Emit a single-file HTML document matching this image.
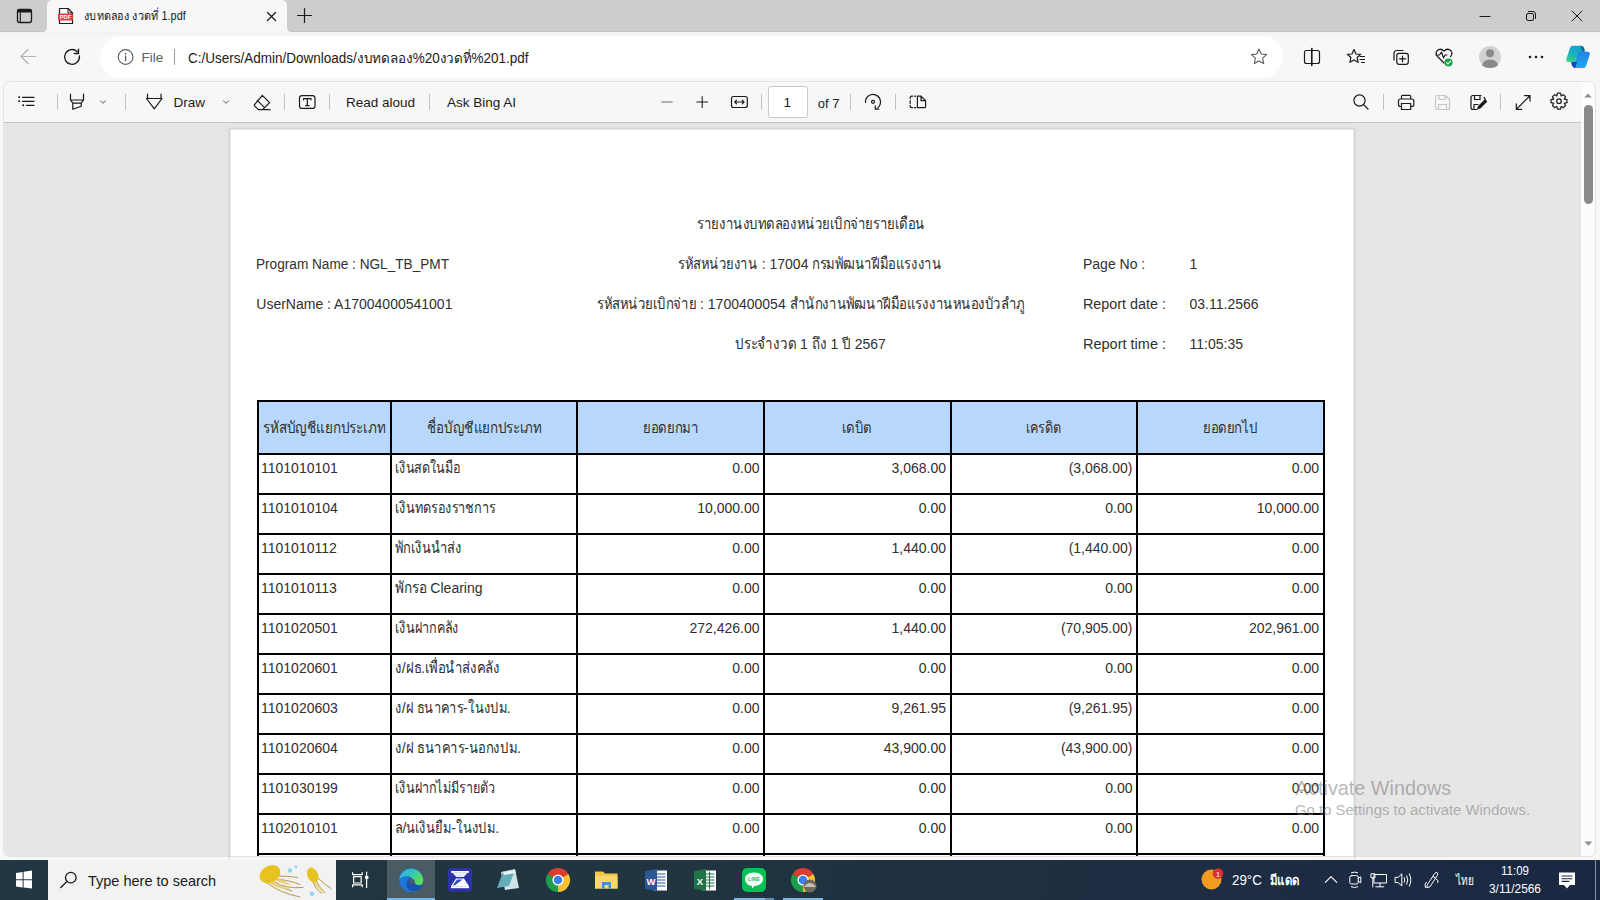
<!DOCTYPE html>
<html><head><meta charset="utf-8">
<style>
*{margin:0;padding:0;box-sizing:border-box}
html,body{width:1600px;height:900px;overflow:hidden;background:#f7f7f7;font-family:"Liberation Sans",sans-serif;color:#1a1a1a}
.abs{position:absolute}
#tabstrip{left:0;top:0;width:1600px;height:32px;background:#cdcdcd;border-bottom:1px solid #c3c3c3}
#nav{left:0;top:32px;width:1600px;height:50px;background:linear-gradient(#f1f1f1,#f7f7f7 5px)}
#addr{left:100px;top:36px;width:1183px;height:42px;border-radius:21px;background:#fff}
#frame{left:3px;top:81px;width:1593px;height:776px;border-radius:7px;background:#e6e6e6;overflow:hidden;border:1px solid #e3e3e3}
#tb{left:0;top:0;width:1577px;height:41px;background:#f7f7f7;border-bottom:1px solid #c4c4c4}
#sb{left:1577px;top:0;width:15px;height:776px;background:#fcfcfc}
#taskbar{left:0;top:860px;width:1600px;height:40px;background:linear-gradient(90deg,#22363f 0%,#213540 40%,#1e2e42 70%,#1a2843 100%)}
#startbtn{left:0;top:860px;width:48px;height:40px;background:#213843}
#search{left:48px;top:860px;width:288px;height:40px;background:#f2f2f2}
#edgehl{left:387px;top:860px;width:48px;height:40px;background:#4b5b64}
.tx{position:absolute;white-space:nowrap;line-height:1}
#tabtitle{left:84px;top:9.5px;font-size:12px;color:#1a1a1a;transform-origin:0 0;transform:scaleX(.905)}
#filetx{left:141.5px;top:51px;font-size:13.5px;color:#5d5d5d}
#urltx{left:187.5px;top:50.5px;font-size:14px;color:#1a1a1a;transform-origin:0 0;transform:scaleX(.964)}
.tbt{font-size:13.5px;color:#1a1a1a;top:96px}
#pgbox{left:768px;top:86px;width:40px;height:32px;border:1px solid #c9c9c9;border-radius:3px;background:#fff}
#watermark1{left:1295px;top:778.5px;font-size:19.8px;color:rgba(120,120,120,.55)}
#watermark2{left:1295px;top:802.5px;font-size:14.9px;color:rgba(120,120,120,.55)}
.tbk{color:#fff}


#page{left:231px;top:130px;width:1122px;height:726px;background:#fff;overflow:hidden}
#pshadow{left:230px;top:129px;width:1124px;height:740px;box-shadow:0 0 2px 1px rgba(0,0,0,.10)}
#page .t{position:absolute;white-space:nowrap;font-size:14px;line-height:16px;color:#303030}
#page .t.c{width:800px;text-align:center}
#page .t.r{width:400px;text-align:right}
#page .in{display:inline-block;transform-origin:0 0}
#page .t.c .in{transform-origin:50% 0}
#page .t.r .in{transform-origin:100% 0}
#page .th{font-size:15.5px}
#page .hbg{position:absolute;background:#b8d8fb}
#page .hl{position:absolute;height:2px;background:#000}
#page .vl{position:absolute;width:2px;background:#000}

</style></head><body>
<div id="tabstrip" class="abs"></div>
<div id="nav" class="abs"></div>
<div id="addr" class="abs"></div>
<div id="frame" class="abs">
  <div id="tb" class="abs"></div>
  <div id="sb" class="abs"></div>
</div>
<div id="pshadow" class="abs"></div>
<div id="page" class="abs"><div class="t c " style="left:179.89999999999998px;top:86.30000000000001px"><span class="in" id="t1"><span class="th" style="display:inline-block;transform:scaleX(0.8465);transform-origin:0 0;margin-right:-41.30px">รายงานงบทดลองหน่วยเบิกจ่ายรายเดือน</span></span></div>
<div class="t " style="left:25.30000000000001px;top:126px"><span class="in" id="t2" style="transform:scaleX(0.9728)">Program Name : NGL_TB_PMT</span></div>
<div class="t c " style="left:179.0px;top:125.69999999999999px"><span class="in" id="t3"><span class="th" style="display:inline-block;transform:scaleX(0.8441);transform-origin:0 0;margin-right:-14.65px">รหัสหน่วยงาน</span> : 17004 <span class="th" style="display:inline-block;transform:scaleX(0.8441);transform-origin:0 0;margin-right:-23.85px">กรมพัฒนาฝีมือแรงงาน</span></span></div>
<div class="t " style="left:852.0px;top:125.75px"><span class="in" id="t4">Page No :</span></div>
<div class="t " style="left:958.5px;top:125.75px"><span class="in" id="t5">1</span></div>
<div class="t " style="left:25.30000000000001px;top:166.10000000000002px"><span class="in" id="t6">UserName : A17004000541001</span></div>
<div class="t c " style="left:179.70000000000005px;top:165.7px"><span class="in" id="t7"><span class="th" style="display:inline-block;transform:scaleX(0.8479);transform-origin:0 0;margin-right:-17.79px">รหัสหน่วยเบิกจ่าย</span> : 1700400054 <span class="th" style="display:inline-block;transform:scaleX(0.8479);transform-origin:0 0;margin-right:-42.13px">สำนักงานพัฒนาฝีมือแรงงานหนองบัวลำภู</span></span></div>
<div class="t " style="left:852.0px;top:165.75px"><span class="in" id="t8" style="transform:scaleX(1.0255)">Report date :</span></div>
<div class="t " style="left:958.5px;top:165.75px"><span class="in" id="t9">03.11.2566</span></div>
<div class="t c " style="left:179.29999999999995px;top:205.7px"><span class="in" id="t10"><span class="th" style="display:inline-block;transform:scaleX(0.8653);transform-origin:0 0;margin-right:-9.57px">ประจำงวด</span> 1 <span class="th" style="display:inline-block;transform:scaleX(0.8653);transform-origin:0 0;margin-right:-2.29px">ถึง</span> 1 <span class="th" style="display:inline-block;transform:scaleX(0.8653);transform-origin:0 0;margin-right:-1.35px">ปี</span> 2567</span></div>
<div class="t " style="left:852.0px;top:205.75px"><span class="in" id="t11" style="transform:scaleX(1.0357)">Report time :</span></div>
<div class="t " style="left:958.5px;top:205.75px"><span class="in" id="t12">11:05:35</span></div>
<div class="hbg" style="left:26.69999999999999px;top:271px;width:1065.8px;height:53px"></div>
<div class="hl" style="left:25.69999999999999px;top:270px;width:1067.8px"></div>
<div class="hl" style="left:25.69999999999999px;top:323px;width:1067.8px"></div>
<div class="hl" style="left:25.69999999999999px;top:363px;width:1067.8px"></div>
<div class="hl" style="left:25.69999999999999px;top:403px;width:1067.8px"></div>
<div class="hl" style="left:25.69999999999999px;top:443px;width:1067.8px"></div>
<div class="hl" style="left:25.69999999999999px;top:483px;width:1067.8px"></div>
<div class="hl" style="left:25.69999999999999px;top:523px;width:1067.8px"></div>
<div class="hl" style="left:25.69999999999999px;top:563px;width:1067.8px"></div>
<div class="hl" style="left:25.69999999999999px;top:603px;width:1067.8px"></div>
<div class="hl" style="left:25.69999999999999px;top:643px;width:1067.8px"></div>
<div class="hl" style="left:25.69999999999999px;top:683px;width:1067.8px"></div>
<div class="hl" style="left:25.69999999999999px;top:723px;width:1067.8px"></div>
<div class="vl" style="left:25.69999999999999px;top:270px;height:459px"></div>
<div class="vl" style="left:158.8px;top:270px;height:459px"></div>
<div class="vl" style="left:345.29999999999995px;top:270px;height:459px"></div>
<div class="vl" style="left:532px;top:270px;height:459px"></div>
<div class="vl" style="left:718.5px;top:270px;height:459px"></div>
<div class="vl" style="left:905px;top:270px;height:459px"></div>
<div class="vl" style="left:1091.5px;top:270px;height:459px"></div>
<div class="t " style="left:31.5px;top:289.6px"><span class="in" id="t13"><span class="th" style="display:inline-block;transform:scaleX(0.8736);transform-origin:0 0;margin-right:-17.70px">รหัสบัญชีแยกประเภท</span></span></div>
<div class="t c " style="left:-147px;top:289.6px"><span class="in" id="t14"><span class="th" style="display:inline-block;transform:scaleX(0.8624);transform-origin:0 0;margin-right:-18.30px">ชื่อบัญชีแยกประเภท</span></span></div>
<div class="t c " style="left:39.700000000000045px;top:289.6px"><span class="in" id="t15"><span class="th" style="display:inline-block;transform:scaleX(0.8523);transform-origin:0 0;margin-right:-9.60px">ยอดยกมา</span></span></div>
<div class="t c " style="left:226px;top:289.6px"><span class="in" id="t16"><span class="th" style="display:inline-block;transform:scaleX(0.8486);transform-origin:0 0;margin-right:-5.30px">เดบิต</span></span></div>
<div class="t c " style="left:412.5px;top:289.6px"><span class="in" id="t17"><span class="th" style="display:inline-block;transform:scaleX(0.8140);transform-origin:0 0;margin-right:-8.00px">เครดิต</span></span></div>
<div class="t c " style="left:598.8px;top:289.6px"><span class="in" id="t18"><span class="th" style="display:inline-block;transform:scaleX(0.8500);transform-origin:0 0;margin-right:-9.60px">ยอดยกไป</span></span></div>
<div class="t " style="left:30.0px;top:330.1px"><span class="in" id="t19">1101010101</span></div>
<div class="t " style="left:164px;top:330.1px"><span class="in" id="t20"><span class="th" style="display:inline-block;transform:scaleX(0.8123);transform-origin:0 0;margin-right:-15.20px">เงินสดในมือ</span></span></div>
<div class="t r " style="left:128.5px;top:330.1px"><span class="in" id="t21">0.00</span></div>
<div class="t r " style="left:315.0px;top:330.1px"><span class="in" id="t22">3,068.00</span></div>
<div class="t r " style="left:501.5px;top:330.1px"><span class="in" id="t23">(3,068.00)</span></div>
<div class="t r " style="left:688.0px;top:330.1px"><span class="in" id="t24">0.00</span></div>
<div class="t " style="left:30.0px;top:370.1px"><span class="in" id="t25">1101010104</span></div>
<div class="t " style="left:164px;top:370.1px"><span class="in" id="t26"><span class="th" style="display:inline-block;transform:scaleX(0.8195);transform-origin:0 0;margin-right:-22.20px">เงินทดรองราชการ</span></span></div>
<div class="t r " style="left:128.5px;top:370.1px"><span class="in" id="t27">10,000.00</span></div>
<div class="t r " style="left:315.0px;top:370.1px"><span class="in" id="t28">0.00</span></div>
<div class="t r " style="left:501.5px;top:370.1px"><span class="in" id="t29">0.00</span></div>
<div class="t r " style="left:688.0px;top:370.1px"><span class="in" id="t30">10,000.00</span></div>
<div class="t " style="left:30.0px;top:410.1px"><span class="in" id="t31">1101010112</span></div>
<div class="t " style="left:164px;top:410.1px"><span class="in" id="t32"><span class="th" style="display:inline-block;transform:scaleX(0.8313);transform-origin:0 0;margin-right:-13.50px">พักเงินนำส่ง</span></span></div>
<div class="t r " style="left:128.5px;top:410.1px"><span class="in" id="t33">0.00</span></div>
<div class="t r " style="left:315.0px;top:410.1px"><span class="in" id="t34">1,440.00</span></div>
<div class="t r " style="left:501.5px;top:410.1px"><span class="in" id="t35">(1,440.00)</span></div>
<div class="t r " style="left:688.0px;top:410.1px"><span class="in" id="t36">0.00</span></div>
<div class="t " style="left:30.0px;top:450.1px"><span class="in" id="t37">1101010113</span></div>
<div class="t " style="left:164px;top:450.1px"><span class="in" id="t38"><span class="th" style="display:inline-block;transform:scaleX(0.8741);transform-origin:0 0;margin-right:-4.53px">พักรอ</span> Clearing</span></div>
<div class="t r " style="left:128.5px;top:450.1px"><span class="in" id="t39">0.00</span></div>
<div class="t r " style="left:315.0px;top:450.1px"><span class="in" id="t40">0.00</span></div>
<div class="t r " style="left:501.5px;top:450.1px"><span class="in" id="t41">0.00</span></div>
<div class="t r " style="left:688.0px;top:450.1px"><span class="in" id="t42">0.00</span></div>
<div class="t " style="left:30.0px;top:490.1px"><span class="in" id="t43">1101020501</span></div>
<div class="t " style="left:164px;top:490.1px"><span class="in" id="t44"><span class="th" style="display:inline-block;transform:scaleX(0.8167);transform-origin:0 0;margin-right:-14.30px">เงินฝากคลัง</span></span></div>
<div class="t r " style="left:128.5px;top:490.1px"><span class="in" id="t45">272,426.00</span></div>
<div class="t r " style="left:315.0px;top:490.1px"><span class="in" id="t46">1,440.00</span></div>
<div class="t r " style="left:501.5px;top:490.1px"><span class="in" id="t47">(70,905.00)</span></div>
<div class="t r " style="left:688.0px;top:490.1px"><span class="in" id="t48">202,961.00</span></div>
<div class="t " style="left:30.0px;top:530.1px"><span class="in" id="t49">1101020601</span></div>
<div class="t " style="left:164px;top:530.1px"><span class="in" id="t50"><span class="th" style="display:inline-block;transform:scaleX(0.8493);transform-origin:0 0;margin-right:-1.21px">ง</span>/<span class="th" style="display:inline-block;transform:scaleX(0.8493);transform-origin:0 0;margin-right:-2.71px">ฝธ</span>.<span class="th" style="display:inline-block;transform:scaleX(0.8493);transform-origin:0 0;margin-right:-13.26px">เพื่อนำส่งคลัง</span></span></div>
<div class="t r " style="left:128.5px;top:530.1px"><span class="in" id="t51">0.00</span></div>
<div class="t r " style="left:315.0px;top:530.1px"><span class="in" id="t52">0.00</span></div>
<div class="t r " style="left:501.5px;top:530.1px"><span class="in" id="t53">0.00</span></div>
<div class="t r " style="left:688.0px;top:530.1px"><span class="in" id="t54">0.00</span></div>
<div class="t " style="left:30.0px;top:570.1px"><span class="in" id="t55">1101020603</span></div>
<div class="t " style="left:164px;top:570.1px"><span class="in" id="t56"><span class="th" style="display:inline-block;transform:scaleX(0.8289);transform-origin:0 0;margin-right:-1.37px">ง</span>/<span class="th" style="display:inline-block;transform:scaleX(0.8289);transform-origin:0 0;margin-right:-11.86px">ฝ ธนาคาร</span>-<span class="th" style="display:inline-block;transform:scaleX(0.8289);transform-origin:0 0;margin-right:-8.04px">ในงปม</span>.</span></div>
<div class="t r " style="left:128.5px;top:570.1px"><span class="in" id="t57">0.00</span></div>
<div class="t r " style="left:315.0px;top:570.1px"><span class="in" id="t58">9,261.95</span></div>
<div class="t r " style="left:501.5px;top:570.1px"><span class="in" id="t59">(9,261.95)</span></div>
<div class="t r " style="left:688.0px;top:570.1px"><span class="in" id="t60">0.00</span></div>
<div class="t " style="left:30.0px;top:610.1px"><span class="in" id="t61">1101020604</span></div>
<div class="t " style="left:164px;top:610.1px"><span class="in" id="t62"><span class="th" style="display:inline-block;transform:scaleX(0.8439);transform-origin:0 0;margin-right:-1.25px">ง</span>/<span class="th" style="display:inline-block;transform:scaleX(0.8439);transform-origin:0 0;margin-right:-10.82px">ฝ ธนาคาร</span>-<span class="th" style="display:inline-block;transform:scaleX(0.8439);transform-origin:0 0;margin-right:-8.90px">นอกงปม</span>.</span></div>
<div class="t r " style="left:128.5px;top:610.1px"><span class="in" id="t63">0.00</span></div>
<div class="t r " style="left:315.0px;top:610.1px"><span class="in" id="t64">43,900.00</span></div>
<div class="t r " style="left:501.5px;top:610.1px"><span class="in" id="t65">(43,900.00)</span></div>
<div class="t r " style="left:688.0px;top:610.1px"><span class="in" id="t66">0.00</span></div>
<div class="t " style="left:30.0px;top:650.1px"><span class="in" id="t67">1101030199</span></div>
<div class="t " style="left:164px;top:650.1px"><span class="in" id="t68"><span class="th" style="display:inline-block;transform:scaleX(0.8129);transform-origin:0 0;margin-right:-23.20px">เงินฝากไม่มีรายตัว</span></span></div>
<div class="t r " style="left:128.5px;top:650.1px"><span class="in" id="t69">0.00</span></div>
<div class="t r " style="left:315.0px;top:650.1px"><span class="in" id="t70">0.00</span></div>
<div class="t r " style="left:501.5px;top:650.1px"><span class="in" id="t71">0.00</span></div>
<div class="t r " style="left:688.0px;top:650.1px"><span class="in" id="t72">0.00</span></div>
<div class="t " style="left:30.0px;top:690.1px"><span class="in" id="t73">1102010101</span></div>
<div class="t " style="left:164px;top:690.1px"><span class="in" id="t74"><span class="th" style="display:inline-block;transform:scaleX(0.8322);transform-origin:0 0;margin-right:-1.51px">ล</span>/<span class="th" style="display:inline-block;transform:scaleX(0.8322);transform-origin:0 0;margin-right:-9.06px">นเงินยืม</span>-<span class="th" style="display:inline-block;transform:scaleX(0.8322);transform-origin:0 0;margin-right:-7.88px">ในงปม</span>.</span></div>
<div class="t r " style="left:128.5px;top:690.1px"><span class="in" id="t75">0.00</span></div>
<div class="t r " style="left:315.0px;top:690.1px"><span class="in" id="t76">0.00</span></div>
<div class="t r " style="left:501.5px;top:690.1px"><span class="in" id="t77">0.00</span></div>
<div class="t r " style="left:688.0px;top:690.1px"><span class="in" id="t78">0.00</span></div></div>
<div id="taskbar" class="abs"></div>
<div id="startbtn" class="abs"></div>
<div id="search" class="abs"></div>
<div id="edgehl" class="abs"></div>
<svg class="abs" style="left:0;top:0" width="1600" height="900" viewBox="0 0 1600 900" fill="none" stroke-linecap="round" stroke-linejoin="round">
  <!-- tab shape -->
  <path d="M42,32 Q47,32 47,27 L47,6 C47,2 49,0 53,0 L281,0 C285,0 287,2 287,6 L287,27 Q287,32 292,32 Z" fill="#f7f7f7"/>
  <!-- sidebar icon -->
  <rect x="17.5" y="9.5" width="14" height="13" rx="2" stroke="#1a1a1a" stroke-width="1.3"/>
  <rect x="17.5" y="9.5" width="14" height="3" fill="#1a1a1a"/>
  <line x1="20.3" y1="12" x2="20.3" y2="22" stroke="#1a1a1a" stroke-width="1.1"/>
  <!-- pdf icon -->
  <path d="M59.5,8.5 H68 L72.5,13 V23.5 H59.5 Z" fill="#fff" stroke="#1a1a1a" stroke-width="1.2"/>
  <path d="M68,8.5 V13 H72.5" stroke="#1a1a1a" stroke-width="1"/>
  <rect x="58" y="13.5" width="15" height="7" rx="1" fill="#e23b3e"/>
  <text x="65.5" y="19.2" font-size="5.8" font-weight="bold" fill="#fff" text-anchor="middle" font-family="Liberation Sans">PDF</text>
  <!-- tab close & new tab -->
  <path d="M267.5,12.5 L275.5,20.5 M275.5,12.5 L267.5,20.5" stroke="#1a1a1a" stroke-width="1.2"/>
  <path d="M297.5,15.5 H311.5 M304.5,8.5 V22.5" stroke="#1a1a1a" stroke-width="1.2"/>
  <!-- window controls -->
  <path d="M1480,16.5 H1490" stroke="#1a1a1a" stroke-width="1"/>
  <rect x="1526.5" y="13.5" width="7" height="7" rx="1.5" stroke="#1a1a1a" stroke-width="1"/>
  <path d="M1528.5,11.5 H1533 Q1535.5,11.5 1535.5,14 V18.5" stroke="#1a1a1a" stroke-width="1"/>
  <path d="M1572,11 L1582,21 M1582,11 L1572,21" stroke="#1a1a1a" stroke-width="1"/>

  <!-- back / refresh -->
  <path d="M36,56.5 H21 M28,49.5 L21,56.5 L28,63.5" stroke="#b3b3b3" stroke-width="1.2"/>
  <path d="M79.4,56 A7.4,7.4 0 1 1 77.3,51.7" stroke="#1a1a1a" stroke-width="1.3"/>
  <path d="M78.5,49.3 V53.5 H74.3" stroke="#1a1a1a" stroke-width="1.4"/>
  <!-- info icon -->
  <circle cx="125.6" cy="57" r="7.4" stroke="#5d5d5d" stroke-width="1.1"/>
  <circle cx="125.6" cy="53.6" r="0.9" fill="#5d5d5d"/>
  <path d="M125.6,55.8 V60.8" stroke="#5d5d5d" stroke-width="1.3"/>
  <path d="M174.5,49.5 V64.5" stroke="#9a9a9a" stroke-width="1"/>
  <!-- star -->
  <path d="M1259,49 L1261.3,54 L1266.6,54.6 L1262.6,58.2 L1263.7,63.6 L1259,60.9 L1254.3,63.6 L1255.4,58.2 L1251.4,54.6 L1256.7,54 Z" stroke="#5d5d5d" stroke-width="1.1"/>
  <!-- split screen -->
  <rect x="1304.5" y="50.5" width="15" height="13" rx="2" stroke="#1a1a1a" stroke-width="1.2"/>
  <path d="M1311.8,48.5 V65.5" stroke="#1a1a1a" stroke-width="1.6"/>
  <!-- favorites -->
  <path d="M1354,49.5 L1356,54 L1360.6,54.4 L1357.1,57.5 L1358.1,62.3 L1354,59.9 L1349.9,62.3 L1350.9,57.5 L1347.4,54.4 L1352,54 Z" stroke="#1a1a1a" stroke-width="1.2"/>
  <path d="M1360,56.5 H1364.5 M1360,59.5 H1364.5 M1361.5,62.5 H1364.5" stroke="#1a1a1a" stroke-width="1.2"/>
  <!-- collections -->
  <path d="M1394,60 V53.5 Q1394,50.5 1397,50.5 H1403" stroke="#1a1a1a" stroke-width="1.2"/>
  <rect x="1396.8" y="53.3" width="11.5" height="11" rx="2.2" stroke="#1a1a1a" stroke-width="1.2"/>
  <path d="M1402.5,56 V61.8 M1399.6,58.9 H1405.4" stroke="#1a1a1a" stroke-width="1.2"/>
  <!-- health -->
  <path d="M1444,63 L1437.5,56.5 Q1435,53.5 1437,50.8 Q1440.5,47.5 1444,51.2 Q1447.5,47.5 1451,50.8 Q1453,53.5 1450.5,56.5" stroke="#1a1a1a" stroke-width="1.2"/>
  <path d="M1436,55 H1439.5 L1441.5,52 L1443.5,58 L1445,55 H1447" stroke="#1a1a1a" stroke-width="1.1"/>
  <circle cx="1448.5" cy="62.5" r="4" fill="#17a34a"/>
  <path d="M1446.6,62.6 L1448,64 L1450.6,61.2" stroke="#fff" stroke-width="1.1"/>
  <!-- profile -->
  <circle cx="1490" cy="57" r="11" fill="#d2d2d2"/>
  <circle cx="1490" cy="53.3" r="4" fill="#8a8a8a"/>
  <path d="M1482,65.5 Q1483,59.5 1490,59.5 Q1497,59.5 1498,65.5 Q1494.5,68 1490,68 Q1485.5,68 1482,65.5 Z" fill="#8a8a8a"/>
  <!-- more -->
  <circle cx="1530" cy="57" r="1.3" fill="#1a1a1a"/><circle cx="1536" cy="57" r="1.3" fill="#1a1a1a"/><circle cx="1542" cy="57" r="1.3" fill="#1a1a1a"/>
  <!-- copilot -->
  <defs>
    <linearGradient id="cpA" x1="0.5" y1="0" x2="0.2" y2="1"><stop offset="0" stop-color="#14a2d6"/><stop offset="0.55" stop-color="#17b3b8"/><stop offset="1" stop-color="#3ed67c"/></linearGradient>
    <linearGradient id="cpB" x1="0.5" y1="0" x2="0.5" y2="1"><stop offset="0" stop-color="#2a7fe8"/><stop offset="1" stop-color="#1aa9ee"/></linearGradient>
    <linearGradient id="edgeG" x1="0" y1="0" x2="1" y2="0.4"><stop offset="0" stop-color="#39b3ee"/><stop offset="0.5" stop-color="#2fc3c0"/><stop offset="1" stop-color="#5bdc5a"/></linearGradient>
  </defs>
  <path d="M1572.6,45.8 H1580.6 Q1583.4,45.8 1584.2,48.8 L1584.8,51.7 H1582 Q1580.6,51.7 1580.1,53.2 L1577.2,61.9 H1568.6 Q1565.6,61.9 1566.3,59 L1569.9,48.3 Q1570.6,45.8 1572.6,45.8 Z" fill="url(#cpA)"/>
  <path d="M1584.8,51.7 L1584.2,48.8 Q1583.4,45.8 1580.6,45.8 L1582,51.7 Z" fill="#0b6f92"/>
  <path d="M1587.4,51.7 Q1590.4,51.7 1589.7,54.6 L1586.2,65.4 Q1585.5,67.9 1583.4,67.9 H1575.4 Q1572.6,67.9 1571.8,64.8 L1571.2,62 H1574 Q1575.4,62 1575.9,60.5 L1578.9,51.7 Z" fill="url(#cpB)"/>
  <path d="M1571.2,62 L1571.8,64.8 Q1572.6,67.9 1575.4,67.9 L1577,62 Z" fill="#1d3fc9"/>

  <!-- PDF toolbar -->
  <g stroke="#1a1a1a" stroke-width="1.3">
    <path d="M22.5,97.3 H34 M22.5,101.3 H34 M26.5,105.3 H34"/>
  </g>
  <circle cx="19.2" cy="97.3" r="1" fill="#1a1a1a"/><circle cx="19.2" cy="101.3" r="1" fill="#1a1a1a"/><circle cx="23.2" cy="105.3" r="1" fill="#1a1a1a"/>
  <g stroke="#c2c2c2" stroke-width="1">
    <path d="M57.5,94.5 V109.5 M125.5,94.5 V109.5 M284.5,94.5 V109.5 M329.5,94.5 V109.5 M429.5,94.5 V109.5 M761.5,94.5 V109.5 M850.5,94.5 V109.5 M895.5,94.5 V109.5 M1383.5,94.5 V109.5 M1500.5,94.5 V109.5"/>
  </g>
  <g stroke="#1a1a1a" stroke-width="1.2">
    <!-- highlighter -->
    <path d="M70.5,94.2 V100 L72.8,103.2 V109.3 L81.2,106.2 V103.2 L83.5,100 V94.2 M70.5,100 H83.5 M72.8,103.2 H81.2"/>
    <!-- draw -->
    <path d="M147.5,94.2 V98.5 M161,94.2 V98.5 M146.5,98.5 H162 L154.3,108.8 Z"/>
    <!-- eraser -->
    <path d="M262.3,95.3 L269.6,102.6 L262.6,109.6 H258.4 L254.6,105.8 Q254,105 254.8,104.3 Z M257.3,100.3 L264.6,107.6 M262.6,109.6 H270"/>
    <!-- text box -->
    <rect x="299.5" y="95.6" width="15.5" height="12.8" rx="2.5"/>
    <path d="M303.6,99.8 V98.6 H311 V99.8 M307.3,98.6 V105.6 M305.6,105.6 H309"/>
    <!-- minus / plus -->
    <path d="M661.8,102 H672.2" stroke="#6a6a6a" stroke-width="1.1"/>
    <path d="M696.8,102 H707.6 M702.2,96.6 V107.4" stroke-width="1.05"/>
    <!-- fit width -->
    <rect x="731.5" y="96.5" width="15.8" height="11" rx="2"/>
    <path d="M734.8,102 H744 M736.5,100.2 L734.8,102 L736.5,103.8 M742.3,100.2 L744,102 L742.3,103.8"/>
    <!-- rotate -->
    <path d="M865.5,102.5 A7.5,7.5 0 1 1 877.6,107.9"/>
    <path d="M875.3,105.9 V109.2 H878.7"/>
    <circle cx="873" cy="101.8" r="1.5"/>
    <!-- page view -->
    <path d="M912.6,96.2 H911.6 Q910.2,96.2 910.2,97.6 V98.6 M910.2,100.6 V103.6 M910.2,105.4 V106.3 Q910.2,107.7 911.6,107.7 H912.6 M914.5,96.2 H915.5 M914.5,107.7 H915.5"/>
    <path d="M917.4,96.2 H921 L925.6,100.6 V106.4 Q925.6,107.7 924.3,107.7 H917.4 Z M921,96.2 V100.6 H925.6"/>
    <!-- search -->
    <circle cx="1359.5" cy="100.5" r="5.6"/>
    <path d="M1363.6,104.6 L1368,109"/>
    <!-- print -->
    <path d="M1401.5,99 V96.5 Q1401.5,95.3 1402.7,95.3 H1409.5 Q1410.7,95.3 1410.7,96.5 V99 M1401.5,106.5 H1400.5 Q1398.5,106.5 1398.5,104.5 V101 Q1398.5,99 1400.5,99 H1411.8 Q1413.8,99 1413.8,101 V104.5 Q1413.8,106.5 1411.8,106.5 H1410.7 M1401.5,103.5 H1410.7 V109.5 H1401.5 Z"/>
    <!-- save as -->
    <path d="M1481,95.5 H1473 Q1471,95.5 1471,97.5 V107.5 Q1471,109.5 1473,109.5 H1477 M1474.5,95.5 V99.5 H1480 V95.5 M1474,109.5 V104.5 H1478"/>
    <path d="M1484,97.5 Q1485.5,99 1485.5,100.5"/>
    <path d="M1486.5,101.5 L1480,108 L1477.8,108.8 L1478.5,106.5 L1485,100 Z" fill="#1a1a1a"/>
    <!-- fullscreen -->
    <path d="M1516.3,109.3 L1530,95.6 M1516.3,103.8 V109.3 H1521.8 M1524.5,95.6 H1530 V101.1"/>
    <!-- settings gear -->
    <g transform="translate(0,-1.3)"><path d="M1557.5,94.5 H1560.5 L1561.2,97.3 L1563.4,96 L1565.6,98.2 L1564.2,100.4 L1567,101 V104 L1564.2,104.6 L1565.6,106.8 L1563.4,109 L1561.2,107.7 L1560.5,110.5 H1557.5 L1556.8,107.7 L1554.6,109 L1552.4,106.8 L1553.8,104.6 L1551,104 V101 L1553.8,100.4 L1552.4,98.2 L1554.6,96 L1556.8,97.3 Z"/>
    <circle cx="1559" cy="102.5" r="2.3"/></g>
  </g>
  <!-- save disabled -->
  <path d="M1445.5,95.5 H1437.5 Q1435.5,95.5 1435.5,97.5 V107.5 Q1435.5,109.5 1437.5,109.5 H1447.5 Q1449.5,109.5 1449.5,107.5 V99.5 Z M1439,95.5 V99.5 H1445 V95.5 M1438.5,109.5 V104.5 H1446.5 V109.5" stroke="#c6c6c6" stroke-width="1.2"/>
  <path d="M100.5,100.8 L103,103.3 L105.5,100.8 M223.5,100.8 L226,103.3 L228.5,100.8" stroke="#5a5a5a" stroke-width="1"/>

  <!-- scrollbar -->
  <path d="M1584.3,97.6 H1591.7 L1588,93.4 Z" fill="#8b8b8b"/>
  <path d="M1584.5,841.5 H1592.3 L1588.4,845.8 Z" fill="#8b8b8b"/>
  <rect x="1584" y="105" width="9" height="99" rx="4.5" fill="#8a8a8a"/>

  <!-- taskbar -->
  <path d="M16,873 L22.6,872 V879.2 H16 Z M23.6,871.8 L32,870.6 V879.2 H23.6 Z M16,880.2 H22.6 V887.4 L16,886.5 Z M23.6,880.2 H32 V888.6 L23.6,887.5 Z" fill="#fff"/>
  <circle cx="70.8" cy="877.6" r="5.3" stroke="#1a1a1a" stroke-width="1.3"/>
  <path d="M66.9,881.5 L60.8,887.5" stroke="#1a1a1a" stroke-width="1.4"/>
  <!-- jellyfish -->
  <g stroke="#b08d3a" stroke-width="0.9">
    <path d="M278,876 Q290,876 297.5,877.5 M277,879 Q292,881 300,884.5 M275,882 Q285,889 303,887.5 M267,883 Q280,893 300,897 M272,882 Q280,888 292,891"/>
    <path d="M316,881 Q321,889 325,893 M318,878 Q325,885 331,888.5 M313,882 Q316,891 322,893"/>
  </g>
  <path d="M273,881 Q285,888 291,889 Q283,891 270,884 Z M278,878 Q288,883 292,885 Q284,885 275,880 Z" fill="#e8cf86"/>
  <ellipse cx="270" cy="874.2" rx="11" ry="8.3" transform="rotate(-30 270 874.2)" fill="#e8c21e"/>
  <ellipse cx="312.7" cy="875" rx="5.3" ry="7.8" transform="rotate(-25 312.7 875)" fill="#e8c21e"/>
  <path d="M315,881 Q320,886 324,892 Q318,890 314,883 Z" fill="#e8cf86"/>
  <circle cx="290" cy="870.5" r="2.2" fill="#8fd3f2"/><circle cx="296" cy="867" r="1.4" fill="#8fd3f2"/><circle cx="312" cy="893.8" r="2.2" fill="#8fd3f2"/>
  <!-- task view -->
  <path d="M352.6,872.2 V874.6 H362.2 V872.2 M352.6,887.2 V884.8 H362.2 V887.2" stroke="#fff" stroke-width="1.2" stroke-linecap="butt"/>
  <rect x="353.6" y="876.6" width="7.6" height="6.4" stroke="#fff" stroke-width="1.2"/>
  <path d="M366.6,872 V887.4" stroke="#fff" stroke-width="1.2"/>
  <rect x="365" y="876" width="3.4" height="3" fill="#fff"/>
  <!-- edge -->
  <circle cx="411.2" cy="880" r="12" fill="#1f78d8"/>
  <path d="M423.2,884 L423.2,893 L416,893 Q420,889 423.2,884 Z" fill="#4b5b64"/>
  <path d="M399.3,879.5 A12,12 0 0 1 423.2,880 Q423.2,885 419,885.2 Q415,885.3 413.8,881.5 Q411.5,876 405.5,876.2 Q401.5,876.5 399.3,879.5 Z" fill="url(#edgeG)"/>
  <path d="M405.5,876.2 Q411.5,876 413.8,881.5 Q415,885.3 419,885.2 Q423,885 422,887.2 Q418,891.5 412,891 Q407,890 406.5,885 Q406.3,880 410,878 Q408,876.3 405.5,876.2 Z" fill="#1b52b0"/>
  <circle cx="412" cy="881.3" r="2.6" fill="#4b5b64"/>
  <!-- scanner -->
  <rect x="448" y="868" width="24" height="23.5" rx="2.5" fill="#2a33a8"/>
  <rect x="451" y="871" width="18" height="1.8" fill="#fff"/>
  <path d="M452.5,872.8 H467.5 L463.8,877 H456.2 Z" fill="#e9eefb"/>
  <path d="M456,878.6 H464 L469,886.2 H451 Z" fill="#fff"/>
  <path d="M457,879.6 H462.5 L455,885.2 H452.8 Z" fill="#2f4fb8"/>
  <rect x="451" y="886.2" width="18" height="2" fill="#fff"/>
  <!-- notepad -->
  <path d="M501,872 L515,869 L519,888 L505,890 Z" fill="#cfe3e8"/>
  <path d="M497,888 L503,872 L515,870 L509,886 Z" fill="#64aebb"/>
  <path d="M503,872 L515,870 L516,873 L504,875 Z" fill="#e8f2f4"/>
  <!-- chrome -->
  <g transform="translate(558,880)">
    <path d="M0,0 L10.4,-6 A12,12 0 0 0 -10.4,-6 Z" fill="#db3d31"/>
    <path d="M0,0 L-10.4,-6 A12,12 0 0 0 0,12 Z" fill="#1e9e4b"/>
    <path d="M0,0 L0,12 A12,12 0 0 0 10.4,-6 Z" fill="#fbc02d"/>
    <circle r="5.6" fill="#fff"/><circle r="4.3" fill="#3d7fe8"/>
  </g>
  <!-- files -->
  <path d="M595,871.5 H603 L605,873.5 H617.5 V888.5 H595 Z" fill="#f5c84a"/>
  <path d="M595,876 H617.5 V888.5 H595 Z" fill="#f9d86a"/>
  <path d="M602,882 H611 V888.5 H608.5 V885 H604.5 V888.5 H602 Z" fill="#3c8fd8"/>
  <!-- word -->
  <path d="M654,870.5 H667 V890.5 H654 Z" fill="#fff"/>
  <path d="M657,874 H665 M657,877 H665 M657,880 H665 M657,883 H665 M657,886 H665" stroke="#2b5797" stroke-width="1"/>
  <path d="M645,871 L657,869 V891 L645,889 Z" fill="#2b5797"/>
  <text x="651" y="884.5" font-size="9.5" font-weight="bold" fill="#fff" text-anchor="middle" font-family="Liberation Sans">W</text>
  <!-- excel -->
  <path d="M703,870.5 H716 V890.5 H703 Z" fill="#fff"/>
  <path d="M706,874 H714 M706,877 H714 M706,880 H714 M706,883 H714 M706,886 H714 M709.5,872 V889" stroke="#217346" stroke-width="1"/>
  <path d="M694,871 L706,869 V891 L694,889 Z" fill="#217346"/>
  <text x="700" y="884.5" font-size="9.5" font-weight="bold" fill="#fff" text-anchor="middle" font-family="Liberation Sans">X</text>
  <!-- line -->
  <rect x="742" y="868" width="24" height="24" rx="5" fill="#06c152"/>
  <path d="M754,872.5 C760,872.5 763,875.5 763,879 C763,883 759,886 754.5,886 L752,888.5 V886 C748,885.5 745,882.5 745,879 C745,875.5 748,872.5 754,872.5 Z" fill="#fff"/>
  <text x="754" y="881.3" font-size="5.2" font-weight="bold" fill="#06c152" text-anchor="middle" font-family="Liberation Sans">LINE</text>
  <!-- chrome 2 -->
  <g transform="translate(803,880)">
    <path d="M0,0 L10.4,-6 A12,12 0 0 0 -10.4,-6 Z" fill="#db3d31"/>
    <path d="M0,0 L-10.4,-6 A12,12 0 0 0 0,12 Z" fill="#1e9e4b"/>
    <path d="M0,0 L0,12 A12,12 0 0 0 10.4,-6 Z" fill="#fbc02d"/>
    <circle r="5.6" fill="#fff"/><circle r="4.3" fill="#3d7fe8"/>
    <circle cx="7" cy="6" r="6.5" fill="#6e6a5e"/>
    <path d="M1,7 Q7,-1 13,7 Z" fill="#c9c3b3"/>
  </g>
  <!-- underlines -->
  <rect x="387" y="898" width="48" height="2" fill="#76b9ed"/>
  <rect x="734" y="898" width="31" height="2" fill="#76b9ed"/>
  <rect x="765" y="898" width="9" height="2" fill="#5d8ab5"/>
  <rect x="783" y="898" width="40" height="2" fill="#76b9ed"/>

  <!-- tray -->
  <circle cx="1211.5" cy="879.5" r="10" fill="#f39c1f"/>
  <circle cx="1218" cy="873.5" r="5.3" fill="#d8322f"/>
  <text x="1218" y="876.6" font-size="7.5" fill="#fff" text-anchor="middle" font-family="Liberation Sans">1</text>
  <path d="M1325.3,882.3 L1331,876.6 L1336.7,882.3" stroke="#fff" stroke-width="1.1"/>
  <g stroke="#fff" stroke-width="1">
    <path d="M1351.5,875.6 H1356.5 Q1358.2,875.6 1358.2,877.3 V882.3 Q1358.2,884 1356.5,884 H1351.5 Q1349.8,884 1349.8,882.3 V877.3 Q1349.8,875.6 1351.5,875.6 Z M1358.2,878.2 L1360.8,876.8 V882.8 L1358.2,881.4 M1351.3,872.8 Q1354.5,871.2 1357.7,872.8 M1351.3,886.8 Q1354.5,888.4 1357.7,886.8"/>
    <path d="M1374.3,874.5 H1386.5 V883 H1374.3 Z M1380,883 V886.5 M1375.8,886.8 H1383.8 M1371.3,873.8 H1375 V877.8 H1371.3 Z M1372.8,878 V887"/>
    <path d="M1395.5,877.3 H1398.2 L1401.8,873.8 V886 L1398.2,882.6 H1395.5 Z M1404.2,877.6 Q1405.6,880 1404.2,882.4 M1406.8,875.8 Q1409,880 1406.8,884.2 M1409.4,873.8 Q1412.4,880 1409.4,886.2"/>
    <path d="M1427.5,884.5 L1434.8,873.3 Q1436.2,871.8 1437.4,872.8 Q1438.3,873.9 1437.3,875.5 L1430,886.7 L1427.2,887.6 Z M1426.2,882.2 Q1423.8,884.8 1425.5,887.6 M1436.5,879.3 Q1439.3,880.2 1437.8,882.5 M1433,876.5 L1435.7,878.3"/>
  </g>
  <path d="M1559,872.5 H1575 V885 H1570 L1567,888.5 L1564,885 H1559 Z" fill="#fff"/>
  <path d="M1562,876 H1572 M1562,878.7 H1572 M1562,881.4 H1569" stroke="#1a2a3f" stroke-width="1.1"/>
  <path d="M1595.5,860 V900" stroke="#8795a8" stroke-width="1"/>
</svg>
<div class="tx" id="tabtitle">งบทดลอง งวดที่ 1.pdf</div>
<div class="tx" id="filetx">File</div>
<div class="tx" id="urltx">C:/Users/Admin/Downloads/งบทดลอง%20งวดที่%201.pdf</div>
<div class="tx tbt" style="left:173.5px">Draw</div>
<div class="tx tbt" style="left:346px">Read aloud</div>
<div class="tx tbt" style="left:447px">Ask Bing AI</div>
<div id="pgbox" class="abs"></div>
<div class="tx tbt" style="left:783.5px">1</div>
<div class="tx tbt" style="left:817.8px;top:96.8px;font-size:13px">of 7</div>
<div class="tx" style="left:88px;top:874px;font-size:14.5px;color:#1a1a1a">Type here to search</div>
<div class="tx tbk" style="left:1231.5px;top:873px;font-size:14.5px;transform-origin:0 0;transform:scaleX(.92)">29°C</div>
<div class="tx tbk" style="left:1269.5px;top:873px;font-size:14px;font-weight:bold;transform-origin:0 0;transform:scaleX(.82)">มีแดด</div>
<div class="tx tbk" style="left:1455.5px;top:874px;font-size:13px;transform-origin:0 0;transform:scaleX(.78)">ไทย</div>
<div class="tx tbk" style="left:1501px;top:865px;font-size:12.5px;transform-origin:0 0;transform:scaleX(.92)">11:09</div>
<div class="tx tbk" style="left:1489px;top:882.5px;font-size:12.5px;transform-origin:0 0;transform:scaleX(.95)">3/11/2566</div>
<div class="tx" id="watermark1">Activate Windows</div>
<div class="tx" id="watermark2">Go to Settings to activate Windows.</div>

</body></html>
